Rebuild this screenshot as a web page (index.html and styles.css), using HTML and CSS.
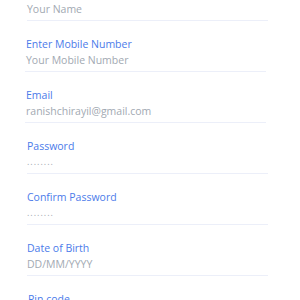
FILE: index.html
```html
<!DOCTYPE html>
<html>
<head>
<meta charset="utf-8">
<link rel="stylesheet" href="styles.css">
</head>
<body>
<form class="form">
  <div class="field f-a">
    <div class="label">Full Name</div>
    <div class="value">Your Name</div>
  </div>
  <div class="field f-b">
    <div class="label">Enter Mobile Number</div>
    <div class="value">Your Mobile Number</div>
  </div>
  <div class="field f-b">
    <div class="label">Email</div>
    <div class="value">ranishchirayil@gmail.com</div>
  </div>
  <div class="field f-c">
    <div class="label">Password</div>
    <div class="value dots">........</div>
  </div>
  <div class="field f-c">
    <div class="label">Confirm Password</div>
    <div class="value dots">........</div>
  </div>
  <div class="field f-c">
    <div class="label">Date of Birth</div>
    <div class="value">DD/MM/YYYY</div>
  </div>
  <div class="field f-d">
    <div class="label">Pin code</div>
    <div class="value">Your Pin code</div>
  </div>
</form>
</body>
</html>
```
FILE: styles.css
```css
html, body {
  margin: 0;
  padding: 0;
  background: #ffffff;
  overflow: hidden;
}
body {
  font-family: "Open Sans", "Noto Sans", sans-serif;
  font-size: 10.5px;
}
.form {
  display: flex;
  flex-direction: column;
  gap: 15px;
  margin-top: -15px;
}
.field {
  display: flex;
  flex-direction: column;
  padding-bottom: 3px;
  border-bottom: 1px solid #eceff9;
}
.f-a { margin-left: 27px; width: 241px; }
.f-b { margin-left: 25px; width: 241px; }
.f-b .label, .f-b .value { padding-left: 1px; }
.f-c { margin-left: 27px; width: 241px; }
.f-d { margin-left: 28px; width: 241px; }
.label {
  line-height: 16px;
  color: #4b7bea;
}
.value {
  line-height: 16px;
  color: #a2a9b2;
}
.dots {
  letter-spacing: 1px;
  font-size: 9px;
}
```
